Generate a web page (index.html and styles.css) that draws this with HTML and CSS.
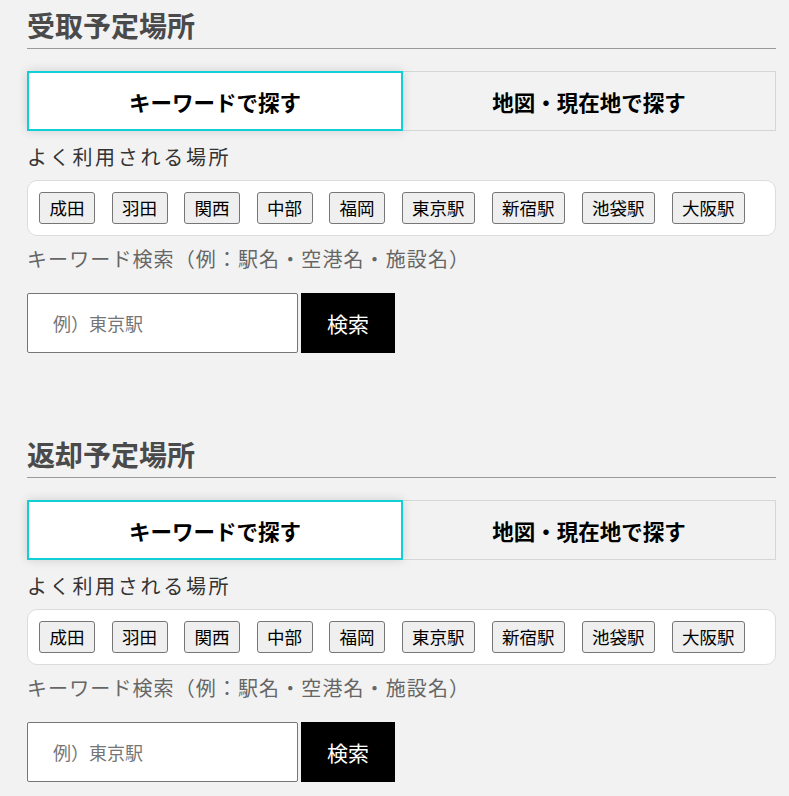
FILE: index.html
```html
<!DOCTYPE html>
<html lang="ja">
<head>
<meta charset="utf-8">
<title>場所選択</title>
<link rel="stylesheet" href="styles.css">
</head>
<body>
  <section class="place">
    <h2 class="place-title">受取予定場所</h2>
    <div class="tabs">
      <button class="tab tab-active">キーワードで探す</button>
      <button class="tab">地図・現在地で探す</button>
    </div>
    <p class="label">よく利用される場所</p>
    <div class="chips">
      <button class="chip">成田</button>
      <button class="chip">羽田</button>
      <button class="chip">関西</button>
      <button class="chip">中部</button>
      <button class="chip">福岡</button>
      <button class="chip">東京駅</button>
      <button class="chip">新宿駅</button>
      <button class="chip">池袋駅</button>
      <button class="chip">大阪駅</button>
    </div>
    <p class="label label-sub">キーワード検索（例：駅名・空港名・施設名）</p>
    <div class="search">
      <input class="search-input" type="text" placeholder="例）東京駅">
      <button class="search-btn">検索</button>
    </div>
  </section>

  <section class="place">
    <h2 class="place-title">返却予定場所</h2>
    <div class="tabs">
      <button class="tab tab-active">キーワードで探す</button>
      <button class="tab">地図・現在地で探す</button>
    </div>
    <p class="label">よく利用される場所</p>
    <div class="chips">
      <button class="chip">成田</button>
      <button class="chip">羽田</button>
      <button class="chip">関西</button>
      <button class="chip">中部</button>
      <button class="chip">福岡</button>
      <button class="chip">東京駅</button>
      <button class="chip">新宿駅</button>
      <button class="chip">池袋駅</button>
      <button class="chip">大阪駅</button>
    </div>
    <p class="label label-sub">キーワード検索（例：駅名・空港名・施設名）</p>
    <div class="search">
      <input class="search-input" type="text" placeholder="例）東京駅">
      <button class="search-btn">検索</button>
    </div>
  </section>
</body>
</html>
```

FILE: styles.css
```css
* { box-sizing: border-box; }

html, body {
  margin: 0;
  background: #f2f2f2;
}

body {
  padding: 0 13px 0 27px;
  font-family: "Noto Sans CJK JP", "Noto Sans", sans-serif;
  color: #333;
}

.place {
  padding-top: 5px;
  padding-bottom: 76px;
}

.place-title {
  margin: 0;
  font-size: 28px;
  line-height: 40px;
  font-weight: 700;
  color: #4a4a4a;
  padding-bottom: 3px;
  border-bottom: 1px solid #9a9a9a;
}

.tabs {
  display: flex;
  margin-top: 22px;
}

.tab {
  flex: 1 1 0;
  height: 60px;
  margin: 0;
  font-family: inherit;
  font-size: 21.5px;
  font-weight: 700;
  color: #000;
  background: #f2f2f2;
  border: 1px solid #d6d6d6;
  border-left: none;
  border-radius: 0;
  padding: 0;
}

.tab-active {
  background: #fff;
  border: 2px solid #12cfd6;
  box-shadow: 0 0 10px rgba(0, 0, 0, 0.15);
  position: relative;
  z-index: 1;
}

.label {
  margin: 11px 0 0;
  font-size: 20px;
  line-height: 30px;
  letter-spacing: 2.7px;
  color: #333;
}

.label-sub {
  margin-top: 8px;
  letter-spacing: 1.1px;
  color: #666;
}

.chips {
  display: flex;
  gap: 16.5px;
  margin-top: 8px;
  padding: 11px;
  background: #fff;
  border: 1px solid #dcdcdc;
  border-radius: 10px;
}

.chip {
  margin: 0;
  height: 32px;
  padding: 0 9.5px;
  font-family: inherit;
  font-size: 17.5px;
  line-height: 24px;
  color: #000;
  background: #efefef;
  border: 1px solid #767676;
  border-radius: 3px;
  white-space: nowrap;
}

.search {
  display: flex;
  gap: 3px;
  margin-top: 19px;
}

.search-input {
  width: 271px;
  height: 60px;
  margin: 0;
  padding: 0 0 0 25px;
  font-family: inherit;
  font-size: 18px;
  color: #000;
  background: #fff;
  border: 1px solid #767676;
  border-radius: 2px;
}

.search-input::placeholder {
  color: #757575;
}

.search-btn {
  width: 94px;
  height: 60px;
  margin: 0;
  padding: 0;
  font-family: inherit;
  font-size: 21px;
  color: #fff;
  background: #000;
  border: none;
  border-radius: 0;
}
```
